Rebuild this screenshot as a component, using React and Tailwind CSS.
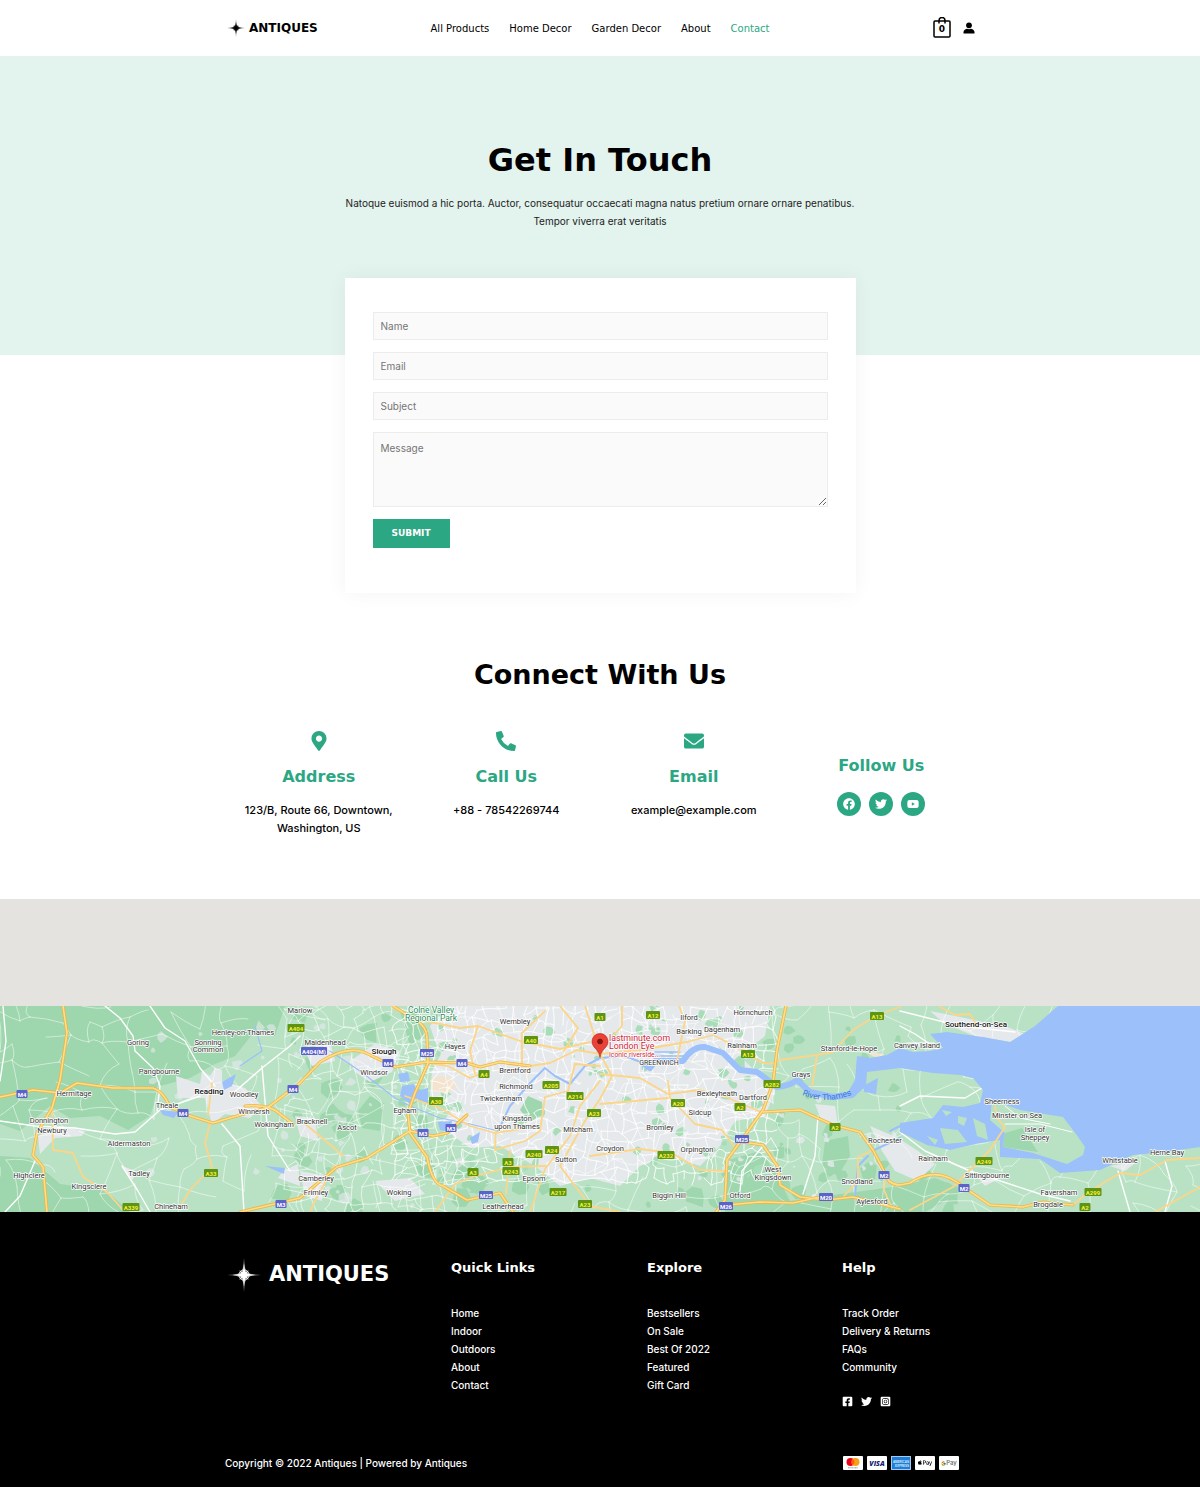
import {
  FaMapMarkerAlt,
  FaPhoneAlt,
  FaEnvelope,
  FaFacebook,
  FaTwitter,
  FaYoutube,
  FaFacebookSquare,
  FaInstagramSquare,
  FaApplePay,
} from 'react-icons/fa';
import { FcGoogle } from 'react-icons/fc';

const heading = "font-['DejaVu_Sans',sans-serif]";

const navLinks = ['All Products', 'Home Decor', 'Garden Decor', 'About', 'Contact'];

const contacts = [
  { icon: FaMapMarkerAlt, title: 'Address', lines: ['123/B, Route 66, Downtown,', 'Washington, US'] },
  { icon: FaPhoneAlt, title: 'Call Us', lines: ['+88 - 78542269744'] },
  { icon: FaEnvelope, title: 'Email', lines: ['example@example.com'] },
];

const footerColumns = [
  { title: 'Quick Links', links: ['Home', 'Indoor', 'Outdoors', 'About', 'Contact'] },
  { title: 'Explore', links: ['Bestsellers', 'On Sale', 'Best Of 2022', 'Featured', 'Gift Card'] },
  { title: 'Help', links: ['Track Order', 'Delivery & Returns', 'FAQs', 'Community'] },
];

// small seeded generator so the side streets are the same on every render
const makeRandom = seed => () => {
  seed = (seed * 16807) % 2147483647;
  return seed / 2147483647;
};

// jittered grid of streets, some edges are left out
const streets = (x0, y0, x1, y1, step, keep, seed) => {
  const rnd = makeRandom(seed);
  const cols = Math.ceil((x1 - x0) / step) + 1;
  const rows = Math.ceil((y1 - y0) / step) + 1;
  const pts = [];
  for (let r = 0; r < rows; r++) {
    pts.push([]);
    for (let c = 0; c < cols; c++) {
      pts[r].push([
        Math.round(x0 + c * step + (rnd() - 0.5) * step * 0.9),
        Math.round(y0 + r * step + (rnd() - 0.5) * step * 0.9),
      ]);
    }
  }
  let d = '';
  const edge = (a, b) => {
    const mx = Math.round((a[0] + b[0]) / 2 + (rnd() - 0.5) * step * 0.5);
    const my = Math.round((a[1] + b[1]) / 2 + (rnd() - 0.5) * step * 0.5);
    if (rnd() < keep) d += `M${a[0]} ${a[1]}Q${mx} ${my} ${b[0]} ${b[1]}`;
  };
  for (let r = 0; r < rows; r++) {
    for (let c = 0; c < cols; c++) {
      if (c + 1 < cols) edge(pts[r][c], pts[r][c + 1]);
      if (r + 1 < rows) edge(pts[r][c], pts[r + 1][c]);
    }
  }
  return d;
};

const blobs = (x0, y0, x1, y1, count, size, seed) => {
  const rnd = makeRandom(seed);
  let d = '';
  for (let i = 0; i < count; i++) {
    const x = x0 + rnd() * (x1 - x0);
    const y = y0 + rnd() * (y1 - y0);
    const s = size * (0.4 + rnd());
    for (let k = 0; k < 7; k++) {
      const a = (k / 7) * Math.PI * 2;
      const r = s * (0.5 + rnd() * 0.6);
      d += `${k ? 'L' : 'M'}${(x + Math.cos(a) * r).toFixed(1)} ${(y + Math.sin(a) * r).toFixed(1)}`;
    }
    d += 'Z';
  }
  return d;
};

const countryLanes = streets(-10, -10, 1210, 216, 24, 0.62, 77);
const cityStreets = streets(395, -5, 770, 172, 10, 0.72, 913);
const westStreets = streets(290, 0, 450, 206, 13, 0.55, 401);
const parks = blobs(430, 0, 760, 170, 80, 5, 52);
const westWoods = blobs(280, 0, 450, 206, 30, 9, 311);
const southWoods = blobs(440, 165, 960, 206, 34, 9, 93);
const eastWoods = blobs(765, 5, 900, 180, 24, 6, 871);
const villages = blobs(150, 20, 460, 200, 50, 5, 67);
const kentVillages = blobs(690, 90, 900, 190, 26, 4, 35);

const motorways = [
  'M0 91L33 84L60 87L77 77L113 82L153 82Q163 85 170 101L187 109L213 117L233 111L267 102L300 77L320 56Q350 37 370 49L395 61L427 56L467 57L480 61L500 56L530 60',
  'M245 100Q270 98 280 108L293 118',
  'M393 0L415 14Q427 20 427 32L428 57L415 87L408 107L410 127L427 151Q432 178 443 180L467 194L500 187L513 206',
  'M240 206L300 192L337 161L367 152L410 125L433 130L447 127L467 109',
  'M63 0L67 27L60 74L52 102L37 127L33 149L43 161L47 206',
  'M786 0L777 44L773 77L763 104L743 132L727 154L725 194L716 206',
  'M743 136L763 139L778 161L780 179L800 191L827 194L853 191L900 203',
  'M727 199L760 196L793 197L820 191',
  'M763 106L800 104L833 119L860 126L873 144L885 167Q888 179 900 179L910 177Q937 158 965 182L990 199L1023 201L1043 196L1073 199',
];

const mainRoads = [
  'M52 102L53 144L73 147L83 171L107 186L123 204',
  'M210 117L205 137L212 161L190 184L180 201',
  'M212 77L208 109',
  'M300 114L320 130L343 150',
  'M530 60L550 57L577 44L600 48L640 44L687 36L713 29L747 46Q765 64 780 54L817 49L833 46L853 24L877 9L900 1',
  'M940 1L955 9L970 8L976 18',
  'M1073 199L1087 187L1120 167L1140 169L1167 154L1200 152',
  'M1155 206L1200 181',
  'M995 101L998 113L1005 121L990 144L953 181L910 204',
  'M428 57L448 60L470 72L486 66',
  'M405 90L440 102L470 120L495 127L540 120',
  'M393 2L420 14L460 22L478 20L520 35L560 43L590 36',
  'M478 20L470 45L475 68',
  'M600 60L575 58L568 85L545 91L540 125L525 135L495 144L496 120',
  'M600 75L580 100L570 130L545 163L530 206',
  'M435 206L455 178L475 170L510 161L545 160',
  'M510 145L506 188',
  'M600 50L592 22L585 0',
  'M600 44L622 20L622 0',
  'M600 68L640 72L668 88L700 84L728 92L763 107',
  'M668 75L670 92L695 118L722 124L734 140',
  'M600 98L668 92',
  'M590 150L640 143L672 147L700 164L725 165',
  'M600 48L612 70L600 93L585 115L560 160L590 200L620 206',
  'M677 55L685 15L679 0',
  'M564 45L578 22L560 0',
  'M522 60L522 27L545 5',
  'M817 49L815 62L812 80',
  'M873 144L858 151L858 175L844 190',
  'M885 167L884 184L892 202',
  'M310 206L316 193L334 160',
];

const labels = [
  ['Goring', 138, 39], ['Henley-on-Thames', 243, 29], ['Sonning', 208, 39], ['Common', 208, 46],
  ['Pangbourne', 159, 68], ['Hermitage', 74, 90], ['Woodley', 244, 91], ['Theale', 167, 102],
  ['Winnersh', 254, 108], ['Donnington', 49, 117], ['Newbury', 52, 127], ['Wokingham', 274, 121],
  ['Bracknell', 312, 118], ['Ascot', 347, 124], ['Aldermaston', 129, 140], ['Tadley', 139, 170],
  ['Highclere', 29, 172], ['Kingsclere', 89, 183], ['Chineham', 171, 203], ['Camberley', 316, 175],
  ['Frimley', 316, 189], ['Woking', 399, 189], ['Maidenhead', 325, 39], ['Windsor', 374, 69],
  ['Egham', 405, 107], ['Hayes', 455, 43], ['Wembley', 515, 18], ['Brentford', 515, 67],
  ['Richmond', 516, 83], ['Twickenham', 501, 95], ['Kingston', 517, 115], ['upon Thames', 517, 123],
  ['Mitcham', 578, 126], ['Sutton', 566, 156], ['Epsom', 534, 175], ['Leatherhead', 503, 203],
  ['Croydon', 610, 145], ['Bromley', 660, 124], ['Orpington', 697, 146], ['Biggin Hill', 669, 192],
  ['Sidcup', 700, 109], ['Bexleyheath', 717, 90], ['Dartford', 753, 94], ['Ilford', 689, 14],
  ['Barking', 689, 28], ['Dagenham', 722, 26], ['Hornchurch', 753, 9], ['Rainham', 742, 42],
  ['Grays', 801, 71], ['Stanford-le-Hope', 849, 45], ['Canvey Island', 917, 42], ['Rochester', 885, 137],
  ['West', 773, 166], ['Kingsdown', 773, 174], ['Otford', 740, 192], ['Snodland', 857, 178],
  ['Aylesford', 872, 198], ['Sheerness', 1002, 98], ['Minster on Sea', 1017, 112], ['Isle of', 1035, 126],
  ['Sheppey', 1035, 134], ['Rainham', 933, 155], ['Sittingbourne', 987, 172], ['Faversham', 1059, 189],
  ['Brogdale', 1048, 201], ['Whitstable', 1120, 157], ['Herne Bay', 1167, 149], ['Marlow', 300, 7],
];

const shields = [
  ['M4', 22, 88], ['M4', 183, 107], ['M4', 293, 83], ['M4', 388, 57], ['M4', 462, 57],
  ['M25', 427, 47], ['M3', 423, 127], ['M3', 451, 122], ['M3', 281, 198], ['M25', 486, 189],
  ['M25', 742, 133], ['M26', 726, 200], ['M20', 826, 191], ['M2', 884, 169], ['M2', 964, 182],
  ['A404(M)', 314, 45], ['A404', 296, 22], ['A33', 211, 167], ['A339', 131, 201], ['A40', 531, 34],
  ['A4', 484, 68], ['A30', 436, 95], ['A205', 551, 79], ['A214', 575, 90], ['A23', 594, 107],
  ['A24', 552, 144], ['A240', 534, 148], ['A3', 508, 156], ['A243', 511, 165], ['A3', 473, 166],
  ['A217', 558, 186], ['A23', 585, 198], ['A1', 600, 11], ['A12', 653, 9], ['A13', 748, 48],
  ['A282', 772, 78], ['A20', 678, 97], ['A2', 740, 101], ['A232', 666, 149], ['A2', 835, 121],
  ['A13', 877, 10], ['A249', 984, 155], ['A299', 1093, 186], ['A2', 1085, 201],
];

const Shield = ({ name, x, y }) => {
  const w = name.length > 4 ? 26 : name.length * 3 + 5;
  const motorway = name.includes('M');
  return (
    <g>
      <rect x={x - w / 2} y={y - 4} width={w} height="8" rx="1" fill={motorway ? '#5b62c9' : '#5d9413'} />
      <text
        x={x}
        y={y + 2.5}
        textAnchor="middle"
        fontSize="6"
        fontWeight="700"
        fill={motorway ? '#fff' : '#f7ee3e'}
      >
        {name}
      </text>
    </g>
  );
};

const Star = ({ className }) => (
  <svg viewBox="0 0 36 36" className={className} fill="currentColor" aria-hidden="true">
    {/* long thin rays */}
    <path
      d="M18 0Q18.500 12 21 15Q24 17.500 36 18Q24 18.500 21 21Q18.500 24 18 36Q17.500 24 15 21Q12 18.500 0 18Q12 17.500 15 15Q17.500 12 18 0Z"
      opacity=".65"
    />
    <path d="M18 6Q18.600 14 20 16Q22 17.400 30 18Q22 18.600 20 20Q18.600 22 18 30Q17.400 22 16 20Q14 18.600 6 18Q14 17.400 16 16Q17.400 14 18 6Z" />
    {/* compass ring */}
    <circle cx="18" cy="18" r="5.500" fill="none" stroke="currentColor" strokeWidth="1" opacity=".8" />
    <path d="M13 13L18 16L23 13L20 18L23 23L18 20L13 23L16 18Z" />
  </svg>
);

const Header = () => (
  <header className="h-14 bg-white">
    <div className="mx-auto grid h-full max-w-[750px] grid-cols-[1fr_auto_1fr] items-center">
      <a href="#home" className="flex items-center gap-1 pl-0.5">
        <Star className="size-[18px]" />
        <span className={`${heading} text-xs font-bold`}>ANTIQUES</span>
      </a>
      <nav className={`${heading} flex gap-5 text-[10px]`}>
        {navLinks.map(link => (
          <a key={link} href="#nav" className={link === 'Contact' ? 'text-[#2ca783]' : 'text-black'}>
            {link}
          </a>
        ))}
      </nav>
      <div className="flex items-center justify-end gap-3">
        <button type="button" aria-label="Cart" className="relative pb-0.5">
          <svg viewBox="0 0 18 21" className="h-[21px] w-[18px]" fill="none" stroke="#000" strokeWidth="1.500">
            <rect x="1" y="4" width="16" height="16" rx="1" />
            <path d="M6 6.500V3.500A3 3 0 0 1 12 3.500V6.500" />
          </svg>
          <span className={`${heading} absolute inset-x-0 top-1.5 text-center text-[9px] leading-3 font-bold`}>0</span>
        </button>
        <a href="#account" aria-label="Account">
          <svg viewBox="0 0 12 12" className="size-3">
            <circle cx="6" cy="3.300" r="2.900" />
            <path d="M.5 11.500V10Q.7 7.500 4 6.700Q6 7.600 8 6.700Q11.300 7.500 11.500 10V11.500Z" />
          </svg>
        </a>
      </div>
    </div>
  </header>
);

const field =
  'w-full border border-[#ececec] bg-[#fafafa] px-[7px] text-[10px] placeholder:text-[#757575] focus:outline-none';

const ContactForm = () => (
  <form className="flex flex-col gap-3 bg-white px-7 pt-[34px] pb-[45px] shadow-[0_0_20px_rgba(0,0,0,0.05)]">
    <input type="text" aria-label="Name" placeholder="Name" className={`${field} h-7`} />
    <input type="email" aria-label="Email" placeholder="Email" className={`${field} h-7`} />
    <input type="text" aria-label="Subject" placeholder="Subject" className={`${field} h-7`} />
    <textarea aria-label="Message" placeholder="Message" className={`${field} h-[75px] resize-y py-[7px] leading-4`} />
    <button
      type="button"
      className={`${heading} h-[29px] self-start bg-[#2ca783] px-[19px] text-[9px] font-bold text-white`}
    >
      SUBMIT
    </button>
  </form>
);

const Connect = () => (
  <section className="mx-auto max-w-[750px] pt-16 pb-[62px]">
    <h2 className={`${heading} text-center text-[27px] leading-9 font-bold`}>Connect With Us</h2>
    <div className="mt-[38px] grid grid-cols-4 text-center">
      {contacts.map(({ icon: Icon, title, lines }) => (
        <div key={title}>
          <Icon className="mx-auto size-5 text-[#2ca783]" />
          <h3 className={`${heading} mt-3.5 text-base leading-6 font-bold text-[#2ca783]`}>{title}</h3>
          <p className="mt-3 text-[11px] leading-[18px] font-medium">
            {lines.map(line => (
              <span key={line} className="block">{line}</span>
            ))}
          </p>
        </div>
      ))}
      <div className="pt-[23px]">
        <h3 className={`${heading} text-base leading-6 font-bold text-[#2ca783]`}>Follow Us</h3>
        <div className="mt-3.5 flex justify-center gap-2">
          {[FaFacebook, FaTwitter, FaYoutube].map((Icon, i) => (
            <a
              key={i}
              href="#social"
              aria-label={['Facebook', 'Twitter', 'YouTube'][i]}
              className="flex size-6 items-center justify-center rounded-full bg-[#2ca783] text-white"
            >
              <Icon className="size-3" />
            </a>
          ))}
        </div>
      </div>
    </div>
  </section>
);

const Map = () => (
  <section className="bg-[#e5e3df] pt-[107px]">
    <svg
      viewBox="0 0 1200 206"
      preserveAspectRatio="xMidYMid slice"
      className="block h-[206px] w-full font-[Roboto,sans-serif]"
      strokeLinejoin="round"
      strokeLinecap="round"
    >
      <rect width="1200" height="206" fill="#b9e2c5" />

      {/* woods and hills */}
      <g fill="#9ed6ae">
        <path d="M0 0H285L275 30L255 25L235 50L215 58L190 72L160 80L150 110L128 124L100 110L70 112L50 100L20 125L0 118Z" />
        <path d="M0 150L30 152L60 178L105 184L130 206H0Z" />
        <path d="M725 155L760 145L775 165L790 195L900 180L935 172L965 184L925 206H725Z" />
        <path d="M825 135L848 130L850 150L838 170L822 160Z" />
        <path d="M370 90L385 98L380 125L362 122L358 105Z" />
        <path d="M400 5L420 8L424 30L410 40Z" />
        <path d={westWoods} />
        <path d={southWoods} />
        <path d={eastWoods} />
      </g>

      {/* towns */}
      <g fill="#e6e9ec">
        <path d="M448 0L500 0H770L765 30L740 50L775 85L765 110L735 115L720 140L700 160L670 150L640 160L620 180L590 172L560 180L535 160L500 140L470 142L440 120L455 100L430 90L432 65L440 50L430 20Z" />
        <path d="M176 70L200 78L202 65L210 70L215 62L222 64L222 75L245 82L262 100L250 112L225 108L212 118L205 92L178 92Z" />
        <path d="M38 130L60 120L85 125L82 130L55 132L40 148Z" />
        <path d="M350 55L375 38L400 45L392 66L370 76L355 66Z" />
        <path d="M305 45L330 35L335 55L312 60Z" />
        <path d="M295 110L315 112L318 135L300 130Z" />
        <path d="M300 165L325 170L322 195L305 190Z" />
        <path d="M375 175L410 172L425 188L395 195Z" />
        <path d="M815 98L835 100L838 118L822 116Z" />
        <path d="M870 120L898 132L918 145L935 158L918 175L895 165L882 145Z" />
        <path d="M930 5L965 12L1010 22L1025 28L1010 36L975 30L945 18Z" />
        <path d="M905 36L935 36L930 44Z M975 168L1000 172L985 180Z M1110 160L1138 155L1125 165Z" />
        <path d="M122 160L138 166L132 174Z M283 165L298 158L300 180L278 172Z" />
        <path d={villages} opacity=".6" />
        <path d={kentVillages} opacity=".8" />
      </g>
      <path d={parks} fill="#a9dcb8" />
      <path d="M528 90L542 96L543 108L530 116L520 104Z" fill="#9ed6ae" />
      <path d="M430 74L440 70L452 72L456 82L446 88L432 84Z M868 46L884 48L882 53L872 50Z" fill="#f3e3cf" />

      {/* side streets */}
      <g fill="none" stroke="#fff">
        <path d={countryLanes} strokeWidth="1" opacity=".5" />
        <path d={westStreets} strokeWidth="1" opacity=".6" />
        <path d={cityStreets} strokeWidth="1" opacity=".85" />
        <g strokeWidth="1.400">
          <path d="M3 0L6 35L0 75" />
          <path d="M0 115L35 120L75 122L115 128L135 126L160 104L200 90" />
          <path d="M105 0L120 12L133 30L135 45L153 62L160 80L157 105" />
          <path d="M150 0L165 22L185 35L200 62L215 80" />
          <path d="M35 155L20 190L5 206" />
          <path d="M230 90L262 62L290 40L300 30" />
          <path d="M222 118L240 140L244 206" />
          <path d="M262 60L268 130L290 165" />
          <path d="M122 160L138 185L150 206" />
          <path d="M818 110L815 150L803 188" />
          <path d="M763 140L742 165L740 185" />
          <path d="M900 126L925 145L970 165L1040 188L1070 195" />
          <path d="M1118 165L1130 206 M1165 155L1172 180L1165 206" />
          <path d="M900 100L920 90L965 92L982 82" />
          <path d="M900 20L915 28L940 45 M900 5L960 20L1015 26" />
        </g>
      </g>

      {/* sea, river and lakes */}
      <g fill="#9cc0f9">
        <path d="M1058 0L1035 20L1010 36L983 31L947 26L930 28L943 42L930 45L913 46L900 42L887 49L870 52L857 50L855 74L848 86L833 88V94L853 92L866 80L867 66L900 62L933 67L960 69L973 72L983 84L980 97L963 101L943 99L933 112L900 117V126L927 139L950 144L980 137L1000 134L1000 151L1040 153L1060 167L1100 164L1133 149L1165 146L1200 141V0Z" />
        <path d="M398 68L408 66L410 75L400 76Z M402 80L414 78L420 90L410 98L400 90Z M417 85L428 82L428 98L418 94Z M438 116L452 115L450 126L440 124Z M470 132L480 126L478 136L472 138Z M414 124L428 122L426 130Z" />
        <path d="M222 76L236 68L232 80L224 84Z M160 104L178 106L174 112L163 109Z M265 160L285 162L284 168Z M863 80L878 72L876 88L864 86Z" />
      </g>
      <g fill="none" stroke="#9cc0f9">
        <path d="M643 57L650 62L655 55L683 55Q692 40 705 41L723 47L740 64L757 66L777 81Q790 80 797 74L810 86L833 91L853 88" strokeWidth="6" />
        <path d="M655 50H684 M655 46H680" strokeWidth="1.500" />
        <path d="M498 125L510 100L532 75L545 62L555 70L570 78L585 60L600 52L625 50L643 57" strokeWidth="2" />
        <path d="M868 150L858 160L855 190 M872 145L900 132 M900 120L890 125" strokeWidth="2" />
        <path d="M255 20L262 45L240 60 M330 45L345 55L360 65L395 92L410 100L440 112L470 118L498 125" strokeWidth="1.200" />
      </g>
      <g fill="#b9e2c5">
        <path d="M992 94L1020 104L1063 111L1076 128L1085 141L1083 149L1067 158L1033 147L1003 141L1005 127L990 114Z" />
        <path d="M942 104L952 106L946 110Z M958 110L967 112L964 120L958 117Z M973 112L985 118L988 134L977 130Z M940 122L958 124L967 136L945 138Z M927 130L938 134L935 139Z" />
      </g>
      <path d="M1005 127L1022 122L1038 146L1003 141Z" fill="#9ed6ae" />
      <path d="M1005 118L1040 118L1072 126 M1005 100L1020 112L1050 118" fill="none" stroke="#fff" />

      {/* main roads, dark edge below a light core */}
      <g fill="none" stroke="#fbd588" strokeWidth="1.800">
        {mainRoads.map(d => <path key={d} d={d} />)}
      </g>
      <g fill="none" stroke="#f0b445" strokeWidth="3.200">
        {motorways.map(d => <path key={d} d={d} />)}
      </g>
      <g fill="none" stroke="#fddf88" strokeWidth="1.600">
        {motorways.map(d => <path key={d} d={d} />)}
      </g>

      {shields.map(([name, x, y]) => <Shield key={`${name}-${x}`} name={name} x={x} y={y} />)}

      <g fontSize="7.500" fill="#333" stroke="#fff" strokeWidth="1.500" paintOrder="stroke" textAnchor="middle">
        {labels.map(([name, x, y]) => <text key={`${name}-${x}`} x={x} y={y}>{name}</text>)}
        <g fontSize="8" fontWeight="500" fill="#111">
          <text x="209" y="88">Reading</text>
          <text x="384" y="48">Slough</text>
          <text x="976" y="21">Southend-on-Sea</text>
        </g>
        <text x="659" y="59" fontSize="7">GREENWICH</text>
        <g fill="#2f8f5b" fontSize="8.500">
          <text x="431" y="7">Colne Valley</text>
          <text x="431" y="15">Regional Park</text>
        </g>
      </g>
      <path id="thames" d="M796 86Q825 102 858 86" fill="none" />
      <text fontSize="8.500" fill="#3a78d8" textAnchor="middle">
        <textPath href="#thames" startOffset="50%">River Thames</textPath>
      </text>

      {/* pin */}
      <path d="M600 51C599 43 592 42 592 35.500A8 8 0 0 1 608 35.500C608 42 601 43 600 51Z" fill="#ea4335" stroke="#b31412" strokeWidth=".6" />
      <circle cx="600" cy="35.500" r="2.800" fill="#811411" />
      <g fill="#d3263a" stroke="#fff" strokeWidth="1.500" paintOrder="stroke" fontSize="8.800">
        <text x="609" y="35">lastminute.com</text>
        <text x="609" y="43">London Eye</text>
        <text x="609" y="51" fontSize="6.800">Iconic riverside...</text>
      </g>
    </svg>
  </section>
);

const card = 'flex h-3.5 w-5 items-center justify-center overflow-hidden rounded-[1px] bg-white';

const Payments = () => (
  <div className="flex gap-1">
    <span className={card}>
      <svg viewBox="0 0 20 14" className="h-full w-full">
        <circle cx="7.500" cy="6" r="4" fill="#eb001b" />
        <circle cx="12.500" cy="6" r="4" fill="#f79e1b" />
        <path d="M10 2.900A4 4 0 0 1 10 9.100A4 4 0 0 1 10 2.900Z" fill="#ff5f00" />
        <path d="M5 11.800H15" stroke="#777" strokeWidth=".8" strokeDasharray="1 .4" />
      </svg>
    </span>
    <span className={card}>
      <svg viewBox="0 0 20 14" className="h-full w-full">
        <text x="10" y="9.500" textAnchor="middle" fontSize="7" fontWeight="800" fontStyle="italic" fill="#1a1f71" fontFamily="Open Sans, sans-serif">VISA</text>
      </svg>
    </span>
    <span className={card}>
      <svg viewBox="0 0 20 14" className="h-full w-full">
        <rect x=".5" y=".5" width="19" height="13" fill="#1f7fd6" stroke="#b5d5f2" strokeWidth=".6" />
        <g fontFamily="Liberation Sans, sans-serif" fontWeight="700" fill="#d3e8fb" fontSize="3" textAnchor="middle">
          <text x="10" y="6.500">AMERICAN</text>
          <text x="11" y="10.500">EXPRESS</text>
        </g>
      </svg>
    </span>
    <span className={card}>
      <FaApplePay className="size-3.5 text-black" />
    </span>
    <span className={card}>
      <FcGoogle className="size-[5px]" />
      <span className="text-[6px] leading-none text-[#5f6368]">Pay</span>
    </span>
  </div>
);

const Footer = () => (
  <footer className="bg-black pt-[46px] pb-[15px] text-[10px] font-medium text-white">
    <div className="mx-auto max-w-[750px]">
      <div className="grid grid-cols-[226fr_196fr_195fr_133fr]">
        <a href="#home" className="flex items-center gap-2 self-start pl-0.5">
          <Star className="size-[34px]" />
          <span className={`${heading} text-[21px] font-bold`}>ANTIQUES</span>
        </a>
        {footerColumns.map(({ title, links }) => (
          <div key={title}>
            <h4 className={`${heading} text-[13px] leading-5 font-bold`}>{title}</h4>
            <ul className="mt-[26px] leading-[18px]">
              {links.map(link => (
                <li key={link}><a href="#link">{link}</a></li>
              ))}
            </ul>
            {title === 'Help' && (
              <div className="mt-5 flex gap-2">
                <a href="#facebook" aria-label="Facebook"><FaFacebookSquare className="size-[11px]" /></a>
                <a href="#twitter" aria-label="Twitter"><FaTwitter className="size-[11px]" /></a>
                <a href="#instagram" aria-label="Instagram"><FaInstagramSquare className="size-[11px]" /></a>
              </div>
            )}
          </div>
        ))}
      </div>
      <div className="mt-[47px] flex items-center justify-between pr-4 leading-[18px]">
        <p>Copyright © 2022 Antiques | Powered by Antiques</p>
        <Payments />
      </div>
    </div>
  </footer>
);

const App = () => {
  return (
    <div className="bg-white font-[Inter,sans-serif] text-black">
      <Header />
      <main>
        <section className="bg-[#e3f3ee] px-4 pt-[84px] pb-[125px] text-center">
          <h1 className={`${heading} text-[32px] leading-10 font-bold`}>Get In Touch</h1>
          <p className="mx-auto mt-3.5 max-w-[520px] text-[10px] leading-[18px] text-[#222]">
            Natoque euismod a hic porta. Auctor, consequatur occaecati magna natus pretium ornare ornare penatibus.
            Tempor viverra erat veritatis
          </p>
        </section>
        <div className="relative mx-auto -mt-[77px] max-w-[511px]">
          <ContactForm />
        </div>
        <Connect />
        <Map />
      </main>
      <Footer />
    </div>
  );
};

export default App;
